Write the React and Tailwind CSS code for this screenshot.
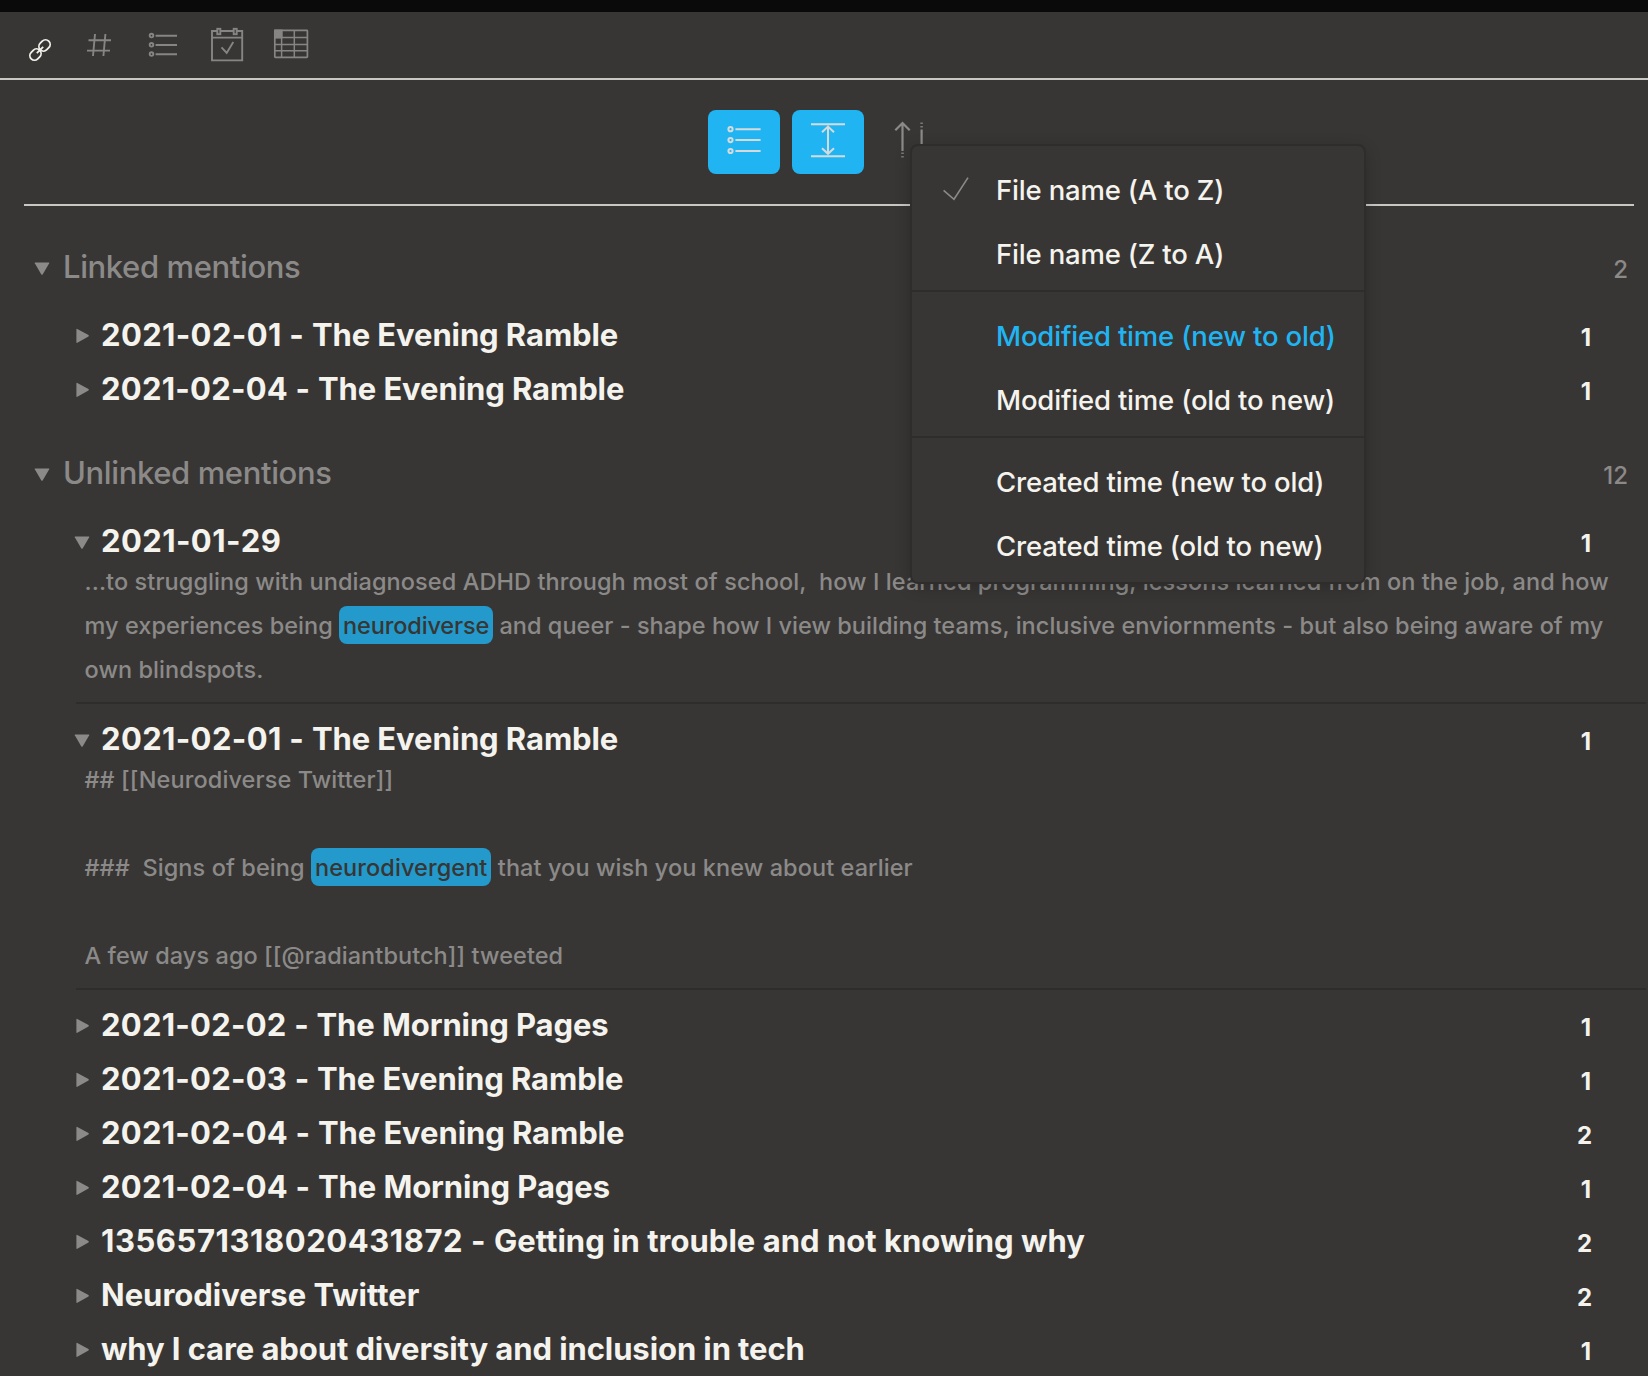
const LINKED = [
  { stamp: '2021-02-01 - ', spacing: 'tracking-[0.36px]', title: 'The Evening Ramble', count: 1 },
  { stamp: '2021-02-04 - ', spacing: 'tracking-[0.24px]', title: 'The Evening Ramble', count: 1 },
];

const UNLINKED = [
  {
    stamp: '2021-01-29',
    spacing: 'tracking-[0.4px]',
    count: 1,
    lines: [
      { spacing: 'tracking-[0.08px]', parts: ['...to struggling with undiagnosed ADHD through most of school,  how I learned programming, lessons learned from on the job, and how'] },
      { spacing: 'tracking-[0.04px]', parts: ['my experiences being ', { mark: 'neurodiverse', spacing: 'tracking-[-0.15px]' }, ' and queer - shape how I view building teams, inclusive enviornments - but also being aware of my'] },
      { spacing: 'tracking-[0.08px]', parts: ['own blindspots.'] },
    ],
  },
  {
    stamp: '2021-02-01 - ',
    spacing: 'tracking-[0.36px]',
    title: 'The Evening Ramble',
    count: 1,
    lines: [
      { spacing: 'tracking-[0.1px]', parts: ['## [[Neurodiverse Twitter]]'] },
      { parts: [' '] },
      { spacing: 'tracking-[0.08px]', parts: ['###  Signs of being ', { mark: 'neurodivergent', spacing: 'tracking-[0.08px]' }, ' that you wish you knew about earlier'] },
      { parts: [' '] },
      { spacing: 'tracking-[0.06px]', parts: ['A few days ago [[@radiantbutch]] tweeted'] },
    ],
  },
  { stamp: '2021-02-02 - ', spacing: 'tracking-[0.24px]', title: 'The Morning Pages', count: 1 },
  { stamp: '2021-02-03 - ', spacing: 'tracking-[0.24px]', title: 'The Evening Ramble', count: 1 },
  { stamp: '2021-02-04 - ', spacing: 'tracking-[0.24px]', title: 'The Evening Ramble', count: 2 },
  { stamp: '2021-02-04 - ', spacing: 'tracking-[0.24px]', title: 'The Morning Pages', count: 1 },
  { stamp: '1356571318020431872 - ', spacing: 'tracking-[0.56px]', title: 'Getting in trouble and not knowing why', titleSpacing: 'tracking-[0.02px]', count: 2 },
  { title: 'Neurodiverse Twitter', titleSpacing: 'tracking-[0px]', count: 2 },
  { title: 'why I care about diversity and inclusion in tech', count: 1 },
];

const MENU = [
  [{ label: 'File name (A to Z)', checked: true }, { label: 'File name (Z to A)' }],
  [{ label: 'Modified time (new to old)', active: true }, { label: 'Modified time (old to new)' }],
  [{ label: 'Created time (new to old)' }, { label: 'Created time (old to new)' }],
];

function ToolbarIcon({ viewBox, children, className = 'text-[#868584]' }) {
  return (
    <svg viewBox={viewBox} className={`h-[66px] w-16 shrink-0 ${className}`} fill="none" stroke="currentColor" strokeWidth="1.9">
      {children}
    </svg>
  );
}

function Toolbar() {
  return (
    <div className="flex h-[68px] border-b-2 border-[#c8c7c4] pl-[3px]">
      <ToolbarIcon viewBox="3 12 64 66" className="text-[#f3f1ec]">
        <g transform="rotate(-45 40 50)" strokeWidth="1.8">
          <rect x="27.6" y="45.4" width="12" height="9.2" rx="4.6" />
          <rect x="40.4" y="45.4" width="12" height="9.2" rx="4.6" />
          <path d="M35.5 50H44.5" />
        </g>
      </ToolbarIcon>
      <ToolbarIcon viewBox="67 12 64 66">
        <path d="M95 34L93 56M105.4 34L103.4 56M88.5 40.2H111M87 50.6H110" />
      </ToolbarIcon>
      <ToolbarIcon viewBox="131 12 64 66">
        <circle cx="151.5" cy="35.6" r="1.8" />
        <circle cx="151.5" cy="44.8" r="1.8" />
        <circle cx="151.5" cy="54.1" r="1.8" />
        <path d="M155.6 35.8H177M155.6 45H177M155.6 54.2H177" />
      </ToolbarIcon>
      <ToolbarIcon viewBox="195 12 64 66">
        <path d="M217 31H212V60.4H242.2V31H237M221 31H233M212 37.6H242.2" />
        <rect x="217.3" y="28.8" width="3" height="5.4" />
        <rect x="233.7" y="28.8" width="3" height="5.4" />
        <path d="M221.5 47.4L226.7 53L233.3 42" />
      </ToolbarIcon>
      <ToolbarIcon viewBox="259 12 64 66">
        <rect x="274.8" y="30.4" width="32.6" height="27" rx="0.6" strokeWidth="1.7" />
        <path d="M275 37.6H307M275 44.4H307M275 50.8H307M281.6 31V57M294.3 31V57" strokeWidth="1.5" />
        <rect x="275" y="30.5" width="6.6" height="7" fill="currentColor" />
      </ToolbarIcon>
    </div>
  );
}

function SortMenu() {
  return (
    <div className="absolute left-[34px] top-[34px] z-10 w-[456px] rounded-lg border-2 border-[#2e2d2b] bg-[#383634] shadow-[0_4px_16px_rgba(0,0,0,0.2)]">
      {MENU.map((group, i) => (
        <div key={i} className={i ? 'border-t-2 border-[#2e2d2b] pb-[3px] pt-[13px]' : 'pb-[3px] pt-[13px]'}>
          {group.map((item) => (
            <div key={item.label} className="flex h-16 items-center">
              <div className="w-[84px] shrink-0">
                {item.checked && (
                  <svg viewBox="912 159 84 64" className="h-16 w-[84px]" fill="none" stroke="#8b8a89" strokeWidth="1.6">
                    <path d="M943.6 190.3L954 199.3L968 177.6" />
                  </svg>
                )}
              </div>
              <span className={`whitespace-nowrap text-[27.5px] font-[450] tracking-[-0.18px] ${item.active ? 'text-[#20b5f2]' : 'text-[#f5f3ee]'}`}>{item.label}</span>
            </div>
          ))}
        </div>
      ))}
    </div>
  );
}

function Controls() {
  return (
    <div className="ml-6 mr-[14px] flex h-[126px] gap-3 border-b-2 border-[#c8c7c4] pl-[684px] pt-[30px]">
      <div className="h-16 w-[72px] rounded-lg bg-[#20b5f2]">
        <svg viewBox="708 110 72 64" className="h-16 w-[72px]" fill="none" stroke="#d5dadb" strokeWidth="2">
          <circle cx="730.5" cy="129.2" r="2.1" />
          <circle cx="730.5" cy="140.1" r="2.1" />
          <circle cx="730.5" cy="151" r="2.1" />
          <path d="M735.4 129.2H760.6M735.4 140.1H760.6M735.4 151H760.6" />
        </svg>
      </div>
      <div className="h-16 w-[72px] rounded-lg bg-[#20b5f2]">
        <svg viewBox="792 110 72 64" className="h-16 w-[72px]" fill="none" stroke="#d5dadb" strokeWidth="2">
          <path d="M811 124.2H845M811 156.2H845M828 127V153.4M822 132.2L828 126.6L834 132.2M822 148.2L828 153.8L834 148.2" />
        </svg>
      </div>
      <div className="relative h-16 w-[72px]">
        <svg viewBox="876 110 72 64" className="h-16 w-[72px]" fill="none" stroke="#8b8a89" strokeWidth="2.2">
          <path d="M902.5 123V151M895.3 130.3L902.5 123L909.7 130.3M921.6 129.5V152" />
          <path d="M902.5 152.5V154M902.5 156V157.5M921.6 122.5V124M921.6 126V127.5" strokeWidth="2.6" opacity="0.8" />
        </svg>
        <SortMenu />
      </div>
    </div>
  );
}

function Triangle({ open }) {
  return (
    <svg viewBox="0 0 16 16" className="h-4 w-4 shrink-0" fill="#8b8a89">
      {open ? (
        <path d="M1.2 2.4Q0.4 2.4 0.8 3.2L7.2 14.2Q8 15.2 8.8 14.2L15.2 3.2Q15.6 2.4 14.8 2.4Z" />
      ) : (
        <path d="M2.4 1.4Q2.4 0.4 3.3 0.9L14.5 7.1Q15.2 7.7 14.5 8.4L3.3 14.8Q2.4 15.2 2.4 14.2Z" />
      )}
    </svg>
  );
}

function SectionHeading({ title, count }) {
  return (
    <div className="flex h-[54px] items-center pl-[34px] pr-5 text-[#8b8a89]">
      <Triangle open />
      <div className="flex flex-1 items-baseline justify-between pl-[13px] leading-[54px]">
        <span className="text-[31px] font-[450] tracking-[-0.38px]">{title}</span>
        <span className="text-[24px] font-[450]">{count}</span>
      </div>
    </div>
  );
}

function Result({ stamp, spacing, title, titleSpacing = 'tracking-[-0.09px]', count, lines }) {
  return (
    <div>
      <div className="flex h-[54px] items-center pl-[74px] pr-14 font-bold text-[#f5f3ee]">
        <Triangle open={Boolean(lines)} />
        <div className="flex flex-1 items-baseline justify-between pl-[11px] leading-[54px]">
          <span className="whitespace-pre text-[31px]">
            {stamp && <span className={`[font-kerning:none] ${spacing}`}>{stamp}</span>}
            <span className={titleSpacing}>{title}</span>
          </span>
          <span className={count === 1 ? 'mr-px text-[24px]' : 'text-[24px]'}>{count}</span>
        </div>
      </div>
      {lines && (
        <div className="-mt-[9px] mb-[9px] ml-[76px] mr-0.5 border-b-2 border-[#2e2d2b] pb-2.5 pl-[8.5px] text-[23.5px] font-[450] leading-[44px] text-[#8b8a89]">
          {lines.map((line, i) => (
            <div key={i} className={`h-11 whitespace-pre ${line.spacing ?? ''}`}>
              {line.parts.map((p, j) =>
                p.mark ? (
                  <span key={j} className={`rounded-lg bg-[#239acb] px-1 pb-1 pt-[5px] text-[#383634] ${p.spacing}`}>{p.mark}</span>
                ) : (
                  <span key={j}>{p}</span>
                )
              )}
            </div>
          ))}
        </div>
      )}
    </div>
  );
}

export default function App() {
  return (
    <div className="h-[1376px] w-[1648px] overflow-hidden bg-[#383634] font-['Inter',sans-serif]">
      <div className="h-3 bg-[#0a0a0a]" />
      <Toolbar />
      <Controls />
      <div className="pt-[35px]">
        <SectionHeading title="Linked mentions" count={2} />
        <div className="pt-3.5">
          {LINKED.map((r) => <Result key={r.stamp} {...r} />)}
        </div>
      </div>
      <div className="pt-[30px]">
        <SectionHeading title="Unlinked mentions" count={12} />
        <div className="pt-3.5">
          {UNLINKED.map((r, i) => <Result key={i} {...r} />)}
        </div>
      </div>
    </div>
  );
}
